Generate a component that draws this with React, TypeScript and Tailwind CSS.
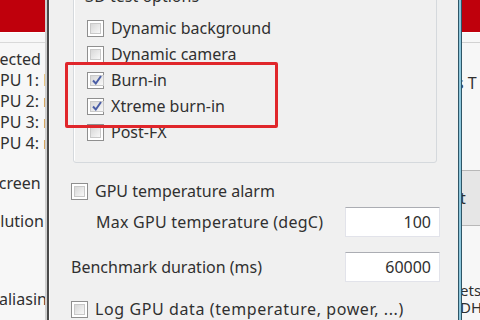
import React from "react";

const font = { fontFamily: '"Noto Sans", "Open Sans", sans-serif' };

const Checkbox = ({ checked = false }: { checked?: boolean }) => (
  <span className="w-[17px] h-[17px] shrink-0 border border-[#8f8f8f] bg-white p-[2px] flex">
    <span className="flex-1 border border-[#c9c9c9] bg-gradient-to-br from-[#d8d8d8] to-[#f8f8f8] flex items-center justify-center">
      {checked && (
        <svg width="12" height="12" viewBox="0 0 12 12">
          <path d="M2 6.5 L4.8 9.5 L10 2" fill="none" stroke="#4b5ea6" strokeWidth="2" />
        </svg>
      )}
    </span>
  </span>
);

const CheckRow = ({ label, checked, className = "" }: { label: string; checked?: boolean; className?: string }) => (
  <div className="h-[26px] flex items-center gap-[7px]">
    <Checkbox checked={checked} />
    <span className={"whitespace-nowrap " + className}>{label}</span>
  </div>
);

const NumField = ({ value }: { value: string }) => (
  <div className="w-[95px] h-[30px] bg-white border border-[#e2e3ea] border-t-[#abadb3] flex items-center justify-end pr-[8px]">
    {value}
  </div>
);

const LeftStrip = () => (
  <div className="w-[47px] shrink-0 flex flex-col bg-[#f7f7f7] border-r-2 border-r-[#cfcfcf] overflow-hidden">
    <div className="h-[33px] bg-[#bf000c] border-b border-b-white" />
    <div className="h-[10px] border-b border-b-[#d9d9d9]" />
    <div className="flex flex-col leading-[21px] whitespace-nowrap pt-[6px]">
      <span className="-ml-[27px]">Detected</span>
      <span>PU 1: NVIDIA</span>
      <span>PU 2: none</span>
      <span>PU 3: none</span>
      <span>PU 4: none</span>
    </div>
    <div className="flex flex-col whitespace-nowrap">
      <span className="mt-[17px] -ml-[10px]">Screen</span>
      <span className="mt-[14px] -ml-[36px]">Resolution</span>
      <span className="mt-[54px] -ml-[31px]">Antialiasing</span>
    </div>
  </div>
);

const RightStrip = () => (
  <div className="w-[18px] shrink-0 flex flex-col bg-[#f7f7f7] overflow-hidden whitespace-nowrap">
    <div className="h-[33px] bg-[#bf000c] border-b border-b-white" />
    <div className="h-[10px] border-b border-b-[#d2d2d2]" />
    <span className="mt-[28px] -ml-[6px]">s T</span>
    <div className="mt-[75px] h-[56px] border-y border-[#b8b8b8] bg-[#e6e6e6] flex items-center">
      <span className="-ml-[2px]">t</span>
    </div>
    <span className="mt-[56px] -ml-[2px] text-[15px] leading-[17px]">ets:</span>
    <span className="-ml-[2px] text-[15px] leading-[17px]">DHD</span>
  </div>
);

export default function App() {
  return (
    <div
      className="w-[480px] h-[320px] overflow-hidden flex text-[16px] text-[#303030] bg-[#f0f0f0]"
      style={font}
    >
      <LeftStrip />
      <div className="w-[2px] shrink-0 bg-[#4a4a4a]" />
      <div className="flex-1 relative flex flex-col pl-[21px] pr-[18px] border-l border-l-[#fafafa]">
        <div className="relative -mt-[4px] ml-[2px] mr-[3px] border border-[#d5d9dd] rounded-[3px] pt-[18px] pb-[17px] pl-[13px] shadow-[inset_1px_1px_0_white]">
          <span className="absolute -top-[13px] left-[9px] px-[2px] bg-[#f0f0f0]">3D test options</span>
          <CheckRow label="Dynamic background" />
          <CheckRow label="Dynamic camera" />
          <CheckRow label="Burn-in" checked />
          <CheckRow label="Xtreme burn-in" checked />
          <CheckRow label="Post-FX" />
        </div>
        <div className="mt-[15px]">
          <CheckRow label="GPU temperature alarm" />
        </div>
        <div className="mt-[3px] flex items-center justify-between pl-[25px]">
          <span className="tracking-[0.25px]">Max GPU temperature (degC)</span>
          <NumField value="100" />
        </div>
        <div className="mt-[15px] flex items-center justify-between">
          <span>Benchmark duration (ms)</span>
          <NumField value="60000" />
        </div>
        <div className="mt-[14px]">
          <CheckRow label="Log GPU data (temperature, power, ...)" className="tracking-[0.6px]" />
        </div>
        <div className="absolute left-[15px] top-[62px] w-[213px] h-[66px] border-[3px] border-[#e0262b] rounded-[2px]" />
      </div>
      <div className="w-[4px] shrink-0 bg-[#8cc6dc] border-x border-x-[#2e5566]" />
      <RightStrip />
    </div>
  );
}
